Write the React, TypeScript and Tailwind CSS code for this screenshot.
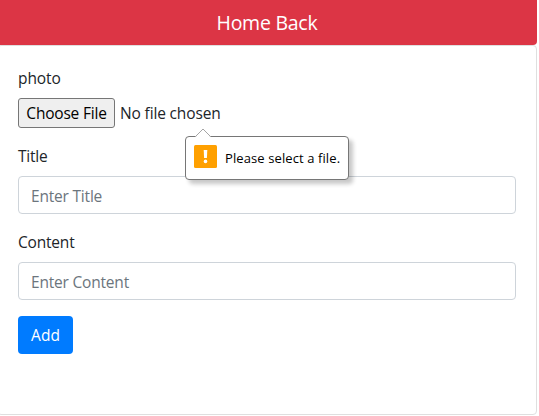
function Field({ label, placeholder }: { label: string; placeholder: string }) {
  return (
    <div className="mb-4">
      <label className="mb-2 block h-6 leading-6 tracking-[-0.2px]">{label}</label>
      <input
        className="block h-[38px] w-full rounded-[4px] border border-[#ced4da] bg-white px-3 pt-[2px] tracking-[-0.2px] placeholder:text-[#6c757d] placeholder:opacity-100 outline-none"
        placeholder={placeholder}
      />
    </div>
  );
}

function ValidationBubble() {
  return (
    <div className="absolute left-[167px] top-[38px] flex h-[44px] w-[164px] items-center rounded-[4px] border border-[#767676] bg-white pl-2 shadow-[4px_4px_4px_rgba(0,0,0,0.22)]">
      <svg className="absolute left-[8px] top-[-9px]" width="18" height="10" viewBox="0 0 18 10">
        <path d="M1 9.5 L9 1 L17 9.5 V10 H1Z" fill="white" />
        <path d="M1 9 L9 1 L17 9" fill="none" stroke="#a5a5a5" />
      </svg>
      <svg className="mb-[3px] shrink-0" width="23" height="23" viewBox="0 0 23 23">
        <rect width="23" height="23" rx="1.5" fill="#ffa000" />
        <path d="M9.7 5 H13.3 L12.9 13 H10.1Z" fill="white" />
        <circle cx="11.5" cy="16.4" r="1.8" fill="white" />
      </svg>
      <span className="ml-[8px] whitespace-nowrap text-[13px] leading-5 tracking-[0.1px] text-black">
        Please select a file.
      </span>
    </div>
  );
}

export default function App() {
  return (
    <div className="h-[416px] w-[539px] overflow-hidden bg-white font-['Open_Sans','Noto_Sans',sans-serif] text-[15.5px] text-[#212529]">
      <div className="-ml-[3px] w-[540px]">
        <header className="flex h-[45px] items-center justify-center rounded-b-[4px] bg-[#dc3545] text-[19.5px] tracking-[-0.25px] text-white">
          <h5>Home Back</h5>
        </header>
        <main className="h-[370px] rounded-[4px] border border-[#dfdfdf] px-5 pt-5">
          <div className="mb-4">
            <label className="mb-2 block h-6 leading-6 tracking-[-0.1px]">photo</label>
            <div className="relative flex h-[30px] items-center">
              <button className="h-[30px] w-[97px] whitespace-nowrap rounded-[3px] border border-[#767676] bg-[#efefef] pt-[2px] tracking-[-0.2px] text-black">
                Choose File
              </button>
              <span className="ml-[5px] whitespace-nowrap pt-[2px] tracking-[-0.15px]">No file chosen</span>
              <ValidationBubble />
            </div>
          </div>
          <Field label="Title" placeholder="Enter Title" />
          <Field label="Content" placeholder="Enter Content" />
          <button className="h-[38px] w-[55px] rounded-[4px] bg-[#007bff] pt-[2px] text-white">Add</button>
        </main>
      </div>
    </div>
  );
}
